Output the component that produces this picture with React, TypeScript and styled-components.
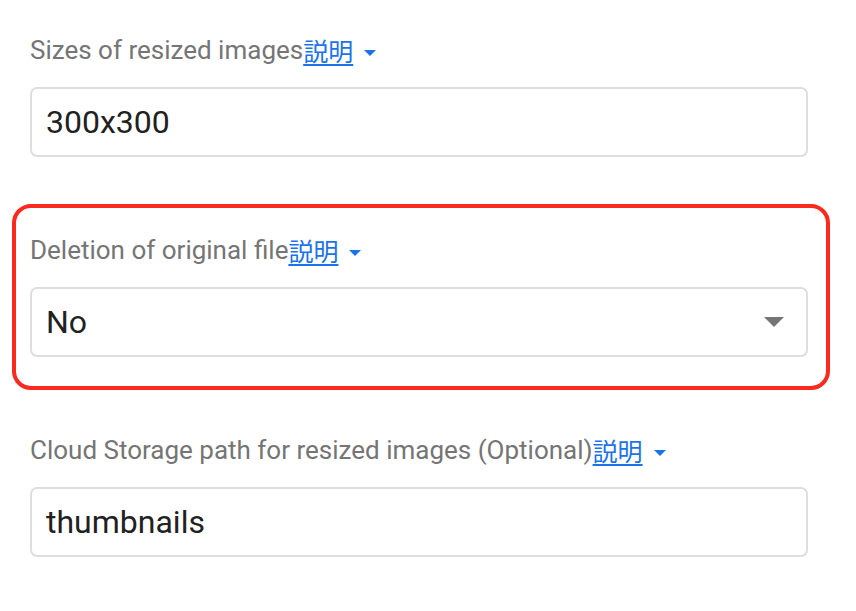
import React from "react";
import styled, { createGlobalStyle } from "styled-components";

const Global = createGlobalStyle`
  html, body { margin: 0; padding: 0; background: #ffffff; }
  body { font-family: Roboto, "Noto Sans CJK JP", sans-serif; }
`;

const Form = styled.div`
  width: 856px;
  height: 611px;
  box-sizing: border-box;
  padding-left: 12px;
  display: flex;
  flex-direction: column;
  align-items: flex-start;
`;

const Field = styled.div<{ $highlight?: boolean; $top: number }>`
  width: 818px;
  box-sizing: border-box;
  margin-top: ${(p) => p.$top}px;
  display: flex;
  flex-direction: column;
  gap: 22px;
  padding: ${(p) => (p.$highlight ? "27px 18px 29px 14px" : "0 22px 0 18px")};
  border: ${(p) => (p.$highlight ? "4px solid #fb2a1e" : "none")};
  border-radius: 19px;
`;

const Label = styled.div`
  height: 30px;
  display: flex;
  align-items: center;
  font-size: 26px;
  color: #757575;
  white-space: nowrap;
`;

const Help = styled.a`
  color: #1a73e8;
  text-decoration: underline;
  text-underline-offset: 3px;
  font-family: "Noto Sans CJK JP", sans-serif;
  font-size: 25px;
  cursor: pointer;
`;

const Caret = styled.span`
  display: inline-block;
  margin-left: 11px;
  margin-top: 6px;
  width: 0;
  height: 0;
  border-left: 6px solid transparent;
  border-right: 6px solid transparent;
  border-top: 6px solid #1a73e8;
`;

const Box = styled.div`
  height: 70px;
  box-sizing: border-box;
  border: 2px solid #dedede;
  border-radius: 7px;
  padding: 0 22px 0 14px;
  display: flex;
  align-items: center;
  justify-content: space-between;
  font-size: 32px;
  color: #212121;
`;

const SelectArrow = styled.span`
  width: 0;
  height: 0;
  border-left: 10px solid transparent;
  border-right: 10px solid transparent;
  border-top: 10px solid #757575;
`;

const FieldLabel = ({ text }: { text: string }) => (
  <Label>
    {text}
    <Help>説明</Help>
    <Caret />
  </Label>
);

export default function App() {
  return (
    <>
      <Global />
      <Form>
        <Field $top={35}>
          <FieldLabel text="Sizes of resized images" />
          <Box>300x300</Box>
        </Field>
        <Field $top={47} $highlight>
          <FieldLabel text="Deletion of original file" />
          <Box>
            No
            <SelectArrow />
          </Box>
        </Field>
        <Field $top={45}>
          <FieldLabel text="Cloud Storage path for resized images (Optional)" />
          <Box>thumbnails</Box>
        </Field>
      </Form>
    </>
  );
}
